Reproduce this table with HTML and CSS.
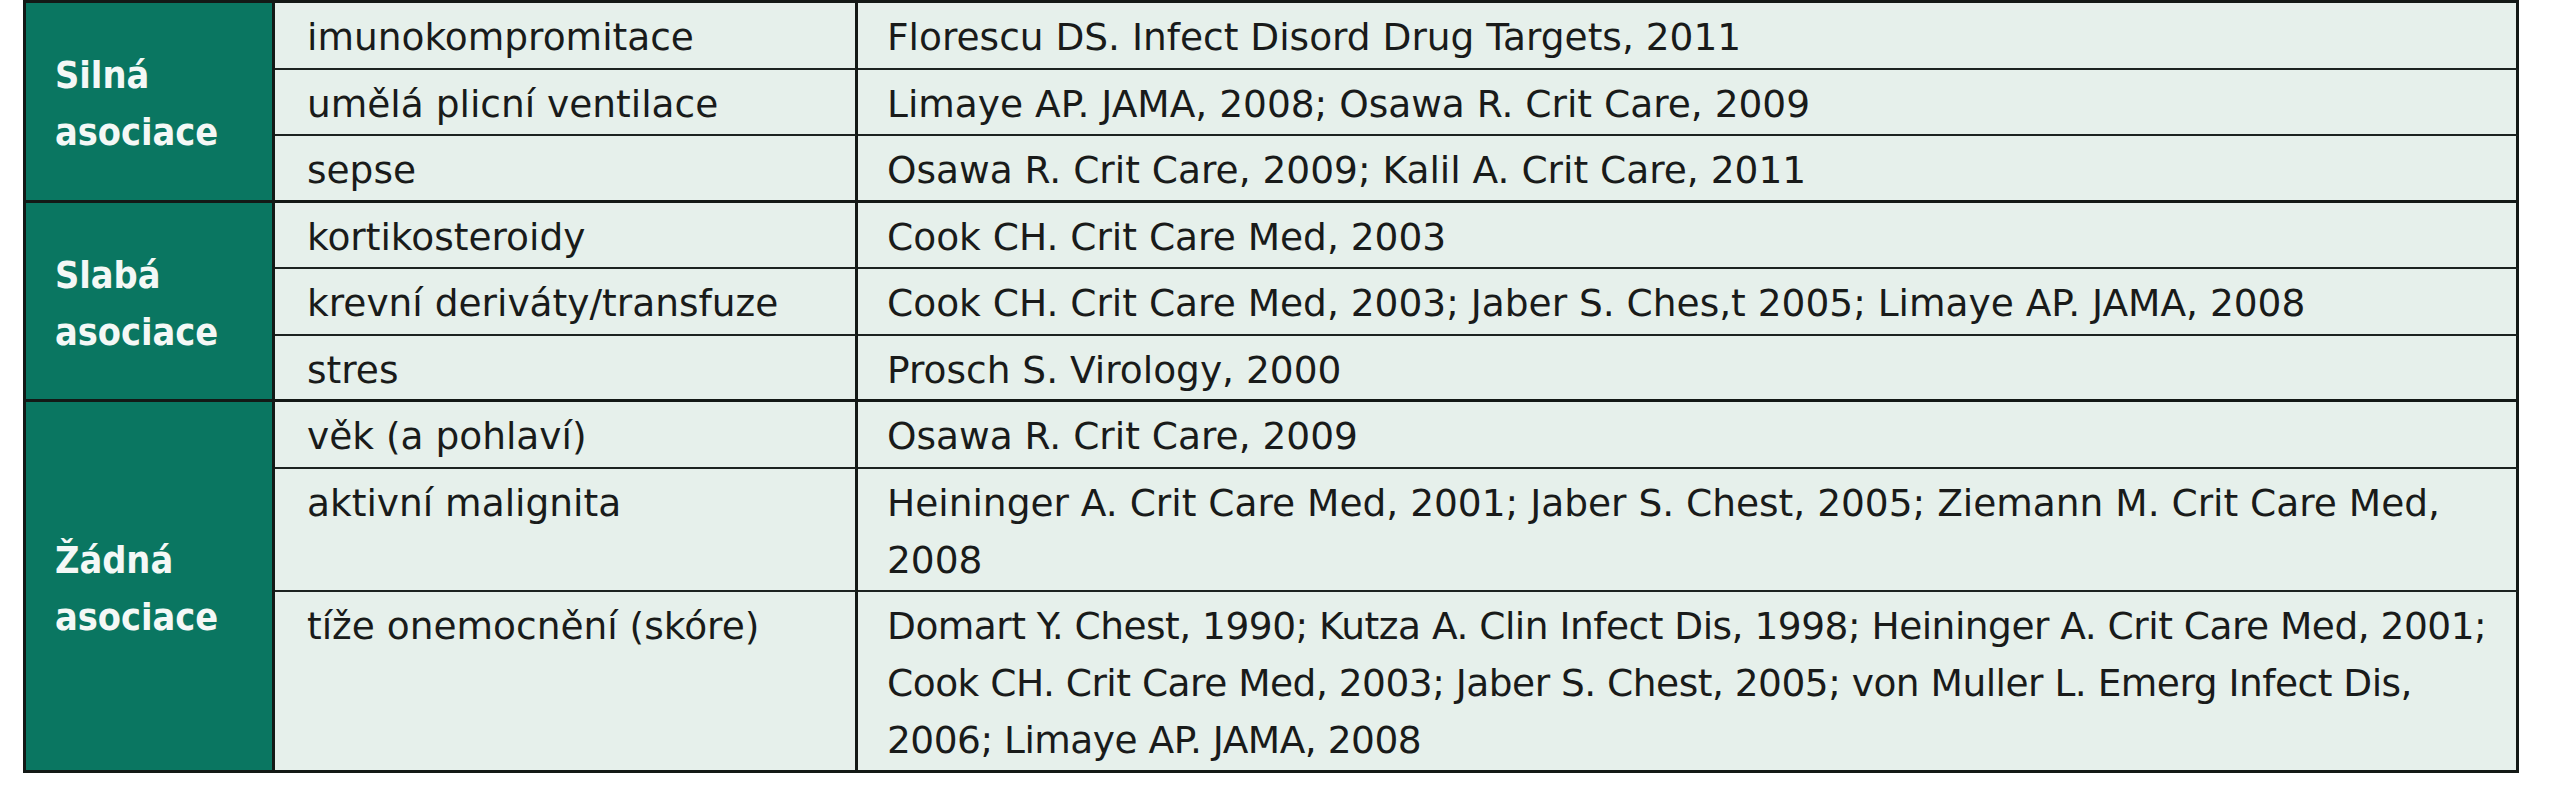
FILE: index.html
```html
<!DOCTYPE html>
<html lang="cs">
<head>
<meta charset="utf-8">
<title>Rizikové faktory</title>
<link rel="stylesheet" href="styles.css">
</head>
<body>
<table class="risk">
  <tbody class="group">
    <tr>
      <td class="grp" rowspan="3">Silná asociace</td>
      <td class="factor">imunokompromitace</td>
      <td class="refs">Florescu DS. Infect Disord Drug Targets, 2011</td>
    </tr>
    <tr>
      <td class="factor">umělá plicní ventilace</td>
      <td class="refs">Limaye AP. JAMA, 2008; Osawa R. Crit Care, 2009</td>
    </tr>
    <tr class="last">
      <td class="factor">sepse</td>
      <td class="refs">Osawa R. Crit Care, 2009; Kalil A. Crit Care, 2011</td>
    </tr>
  </tbody>
  <tbody class="group">
    <tr>
      <td class="grp" rowspan="3">Slabá asociace</td>
      <td class="factor">kortikosteroidy</td>
      <td class="refs">Cook CH. Crit Care Med, 2003</td>
    </tr>
    <tr>
      <td class="factor">krevní deriváty/transfuze</td>
      <td class="refs">Cook CH. Crit Care Med, 2003; Jaber S. Ches,t 2005; Limaye AP. JAMA, 2008</td>
    </tr>
    <tr class="last">
      <td class="factor">stres</td>
      <td class="refs">Prosch S. Virology, 2000</td>
    </tr>
  </tbody>
  <tbody class="group">
    <tr>
      <td class="grp" rowspan="3">Žádná asociace</td>
      <td class="factor">věk (a pohlaví)</td>
      <td class="refs">Osawa R. Crit Care, 2009</td>
    </tr>
    <tr>
      <td class="factor">aktivní malignita</td>
      <td class="refs">Heininger A. Crit Care Med, 2001; Jaber S. Chest, 2005; Ziemann M. Crit Care Med, 2008</td>
    </tr>
    <tr class="last">
      <td class="factor">tíže onemocnění (skóre)</td>
      <td class="refs dense">Domart Y. Chest, 1990; Kutza A. Clin Infect Dis, 1998; Heininger A. Crit Care Med, 2001; Cook CH. Crit Care Med, 2003; Jaber S. Chest, 2005; von Muller L. Emerg Infect Dis, 2006; Limaye AP. JAMA, 2008</td>
    </tr>
  </tbody>
</table>
</body>
</html>
```
FILE: styles.css
```css
html, body {
  margin: 0;
  padding: 0;
  background: #ffffff;
}

body {
  font-family: "DejaVu Sans", "Liberation Sans", sans-serif;
  font-size: 37.5px;
  color: #191b1a;
}

.risk {
  margin: 0 0 0 23px;
  width: 2496px;
  box-sizing: border-box;
  table-layout: fixed;
  border-collapse: separate;
  border-spacing: 0;
  border-top: 3px solid #131916;
  border-left: 3px solid #131916;
}

.risk td {
  box-sizing: border-box;
  border-right: 3px solid #131916;
  border-bottom: 2px solid #1c2320;
  line-height: 57px;
  padding: 6px 30px 1.5px 30px;
  vertical-align: top;
  background: #e6f0eb;
}

.risk .last td {
  border-bottom: 3px solid #131916;
  padding-bottom: 0.5px;
}

.risk .grp {
  width: 249px;
  padding-left: 29px;
  padding-right: 20px;
  padding-bottom: 0.5px;
  vertical-align: middle;
  background: #0a7661;
  color: #f4f8f6;
  font-family: "DejaVu Sans Condensed", "DejaVu Sans", sans-serif;
  font-weight: bold;
  border-bottom: 3px solid #131916;
}

.risk .factor {
  width: 583px;
  padding-left: 32px;
}

.risk .refs {
  padding-left: 29px;
  padding-right: 22px;
}

.risk .refs.dense {
  letter-spacing: -0.5px;
}
```
